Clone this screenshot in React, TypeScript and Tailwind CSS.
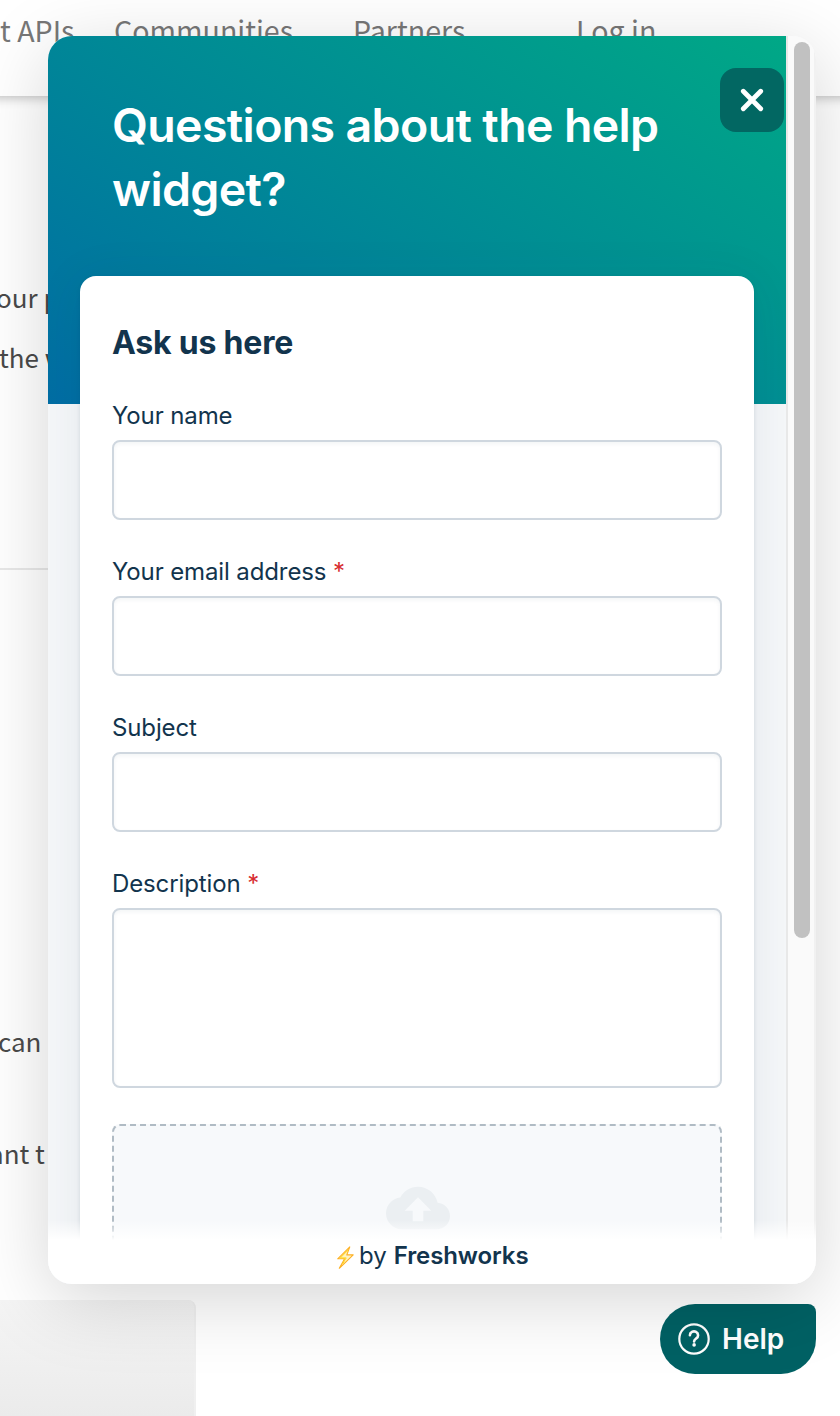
import React from "react";

function Field({ label, required, tall }: { label: string; required?: boolean; tall?: boolean }) {
  return (
    <label className="flex flex-col">
      <span className="h-9 whitespace-nowrap text-2xl leading-6 tracking-[-0.12px] text-[#12344d]">
        {label}
        {required && <span className="text-[#d72d30]"> *</span>}
      </span>
      {tall ? (
        <textarea className="h-[180px] w-full resize-none rounded-lg border-2 border-[#cfd7df] bg-white shadow-[inset_0_2px_4px_rgba(24,50,71,0.05)] outline-none" />
      ) : (
        <input className="h-20 w-full rounded-lg border-2 border-[#cfd7df] bg-white shadow-[inset_0_2px_4px_rgba(24,50,71,0.05)] outline-none" />
      )}
    </label>
  );
}

function PageBehind() {
  return (
    <div className="flex h-full flex-col overflow-hidden font-['Noto_Sans_CJK_SC','Noto_Sans',sans-serif]">
      <header className="relative -mx-5 flex h-24 shrink-0 whitespace-nowrap bg-white px-5 pt-[10px] text-[28.6px] leading-10 text-[#777] shadow-[0_2px_10px_rgba(0,0,0,0.25)]">
        <span className="w-[114px]">t APIs</span>
        <span className="w-[239px]">Communities</span>
        <span className="w-[223px]">Partners</span>
        <span>Log in</span>
      </header>
      <main className="flex grow flex-col whitespace-nowrap text-[26px] leading-[60px] text-[#4a4a4a]">
        <div className="h-[474px] w-[400px] border-b-2 border-[#e8e8e8] pt-[171px]">
          <p className="-ml-[4px]">our p</p>
          <p className="-ml-px">the w</p>
        </div>
        <p className="-ml-[2px] mt-[441px]">can</p>
        <p className="-ml-[11px] mt-[52px]">ant t</p>
        <div className="mt-[117px] h-[116px] w-[196px] rounded-tr-lg border-r-2 border-[#f0f0f0] bg-linear-to-b from-[#f5f5f5] to-[#ebebeb]" />
      </main>
    </div>
  );
}

function Widget() {
  return (
    <section className="absolute left-12 top-9 flex h-[1248px] w-[768px] flex-col overflow-hidden rounded-3xl bg-[#f5f7f9]">
      <div className="flex h-full">
        <div className="h-full w-[738px] overflow-hidden bg-[#f5f7f9]">
          <header className="flex h-[368px] items-start justify-between bg-linear-[34deg] from-[#006da4] to-[#00a886] pl-16 pr-[2px]">
            <h1 className="w-[580px] whitespace-nowrap pt-[57px] text-[46.5px] font-semibold leading-16 tracking-[-0.65px] text-white">
              Questions about the help
              <br />
              widget?
            </h1>
            <button className="mt-8 flex size-16 items-center justify-center rounded-2xl bg-[#026762]">
              <svg viewBox="0 0 24 24" className="size-6" fill="none" stroke="white" strokeWidth="4.8" strokeLinecap="round">
                <path d="M3.3 3.3 20.7 20.7M20.7 3.3 3.3 20.7" />
              </svg>
            </button>
          </header>
          <div className="relative mx-8 -mt-32 h-[1100px] rounded-2xl bg-white px-8 pt-[47px] shadow-[0_2px_4px_rgba(18,52,77,0.12),0_4px_48px_rgba(18,52,77,0.08)]">
            <h2 className="h-[81px] whitespace-nowrap text-[32px] font-bold leading-10 tracking-[-0.2px] text-[#12344d]">Ask us here</h2>
            <form className="flex flex-col gap-10">
              <Field label="Your name" />
              <Field label="Your email address" required />
              <Field label="Subject" />
              <Field label="Description" required tall />
              <div className="-mt-1 flex h-60 justify-center rounded-lg border-2 border-dashed border-[#b0bbc4] bg-[#f7f9fb] pl-[2px] pt-[50px]">
                <svg viewBox="0 0 24 24" className="size-16" fill="#ebeff2">
                  <path d="M19.35 10.04C18.67 6.59 15.64 4 12 4 9.11 4 6.6 5.64 5.35 8.04 2.34 8.36 0 10.91 0 14c0 3.31 2.69 6 6 6h13c2.76 0 5-2.24 5-5 0-2.64-2.05-4.78-4.65-4.96zM14 13v4h-4v-4H7l5-5 5 5h-3z" />
                </svg>
              </div>
            </form>
          </div>
        </div>
        <div className="flex h-full w-[30px] items-start border-l-2 border-r-2 border-l-[#e8e8e8] border-r-[#f1f1f1] bg-[#fafafa] pl-[6px] pt-[6px]">
          <div className="h-[896px] w-4 rounded-full bg-[#c1c1c1]" />
        </div>
      </div>
      <div className="absolute inset-x-0 bottom-0">
        <div className="h-5 bg-linear-to-b from-white/0 to-white" />
        <footer className="flex h-11 items-start whitespace-nowrap bg-white pl-[288px] text-2xl leading-8 text-[#12344d]">
          <svg viewBox="0 0 18 25" className="mt-[5px] h-[25px] w-[18px]" fill="#fff3c4" stroke="#fdb022" strokeWidth="1.1" strokeLinejoin="round">
            <path d="M13.8 1.9 1.7 13.8H8.6L3.3 23.3 17.2 9.9H10.8Z" />
            <path d="M12.2 5 4.4 12.9H10.2L6.6 19" fill="none" stroke="#ffd60a" strokeWidth=".9" />
          </svg>
          <span className="ml-[5px]">by</span>
          <span className="ml-[7px] font-semibold tracking-[-0.1px]">Freshworks</span>
        </footer>
      </div>
    </section>
  );
}

export default function App() {
  return (
    <div className="relative h-[1416px] w-[840px] overflow-hidden bg-white font-['Inter',sans-serif]">
      <PageBehind />
      <button className="absolute left-[660px] top-[1304px] flex h-[70px] w-[156px] items-center rounded-[35px] rounded-tr-lg bg-[#006164] pl-[18px] text-white">
        <svg viewBox="0 0 32 32" className="size-8" fill="none" stroke="white" strokeWidth="2.2">
          <circle cx="16" cy="16" r="14.7" />
          <path d="M11.9 12.2a4.1 3.8 0 1 1 6.2 3.3c-1.4 1-2 1.5-2 2.9" strokeWidth="2.6" strokeLinecap="round" />
          <circle cx="16.1" cy="21.9" r="1.8" fill="white" stroke="none" />
        </svg>
        <span className="ml-3 text-[28px] font-semibold leading-8">Help</span>
      </button>
      <div className="pointer-events-none absolute left-12 top-9 h-[1248px] w-[768px] rounded-3xl shadow-[0_16px_76px_rgba(0,0,0,0.17)]" />
      <Widget />
    </div>
  );
}
